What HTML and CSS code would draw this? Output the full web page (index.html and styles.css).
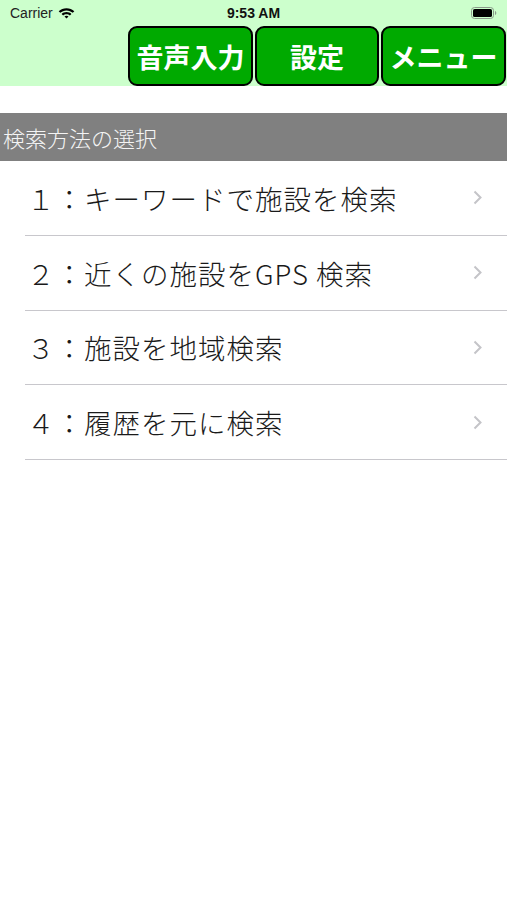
FILE: index.html
```html
<!DOCTYPE html>
<html>
<head>
    <title>検索方法の選択</title>
    <meta charset="utf-8">
    <link rel="stylesheet" href="styles.css">
</head>
<body>
    <div class="top">
        <div class="status-bar">
            <div class="carrier">
                Carrier
                <svg class="wifi" width="17" height="12" viewBox="0 0 17 12">
                    <path d="M8.5 1.2c3 0 5.7 1.1 7.8 3l-1.5 1.6c-1.7-1.5-3.9-2.4-6.3-2.4S3.9 4.3 2.2 5.8L.7 4.2c2.1-1.9 4.8-3 7.8-3z" fill="#000"/>
                    <path d="M8.5 5c1.9 0 3.6.7 4.9 1.9l-1.5 1.6c-.9-.8-2.1-1.3-3.4-1.3s-2.5.5-3.4 1.3L3.6 6.9C4.9 5.7 6.6 5 8.5 5z" fill="#000"/>
                    <path d="M8.5 8.7c.8 0 1.5.3 2 .8L8.5 11.6 6.5 9.5c.5-.5 1.2-.8 2-.8z" fill="#000"/>
                </svg>
            </div>
            <div class="time">9:53 AM</div>
            <div class="battery">
                <svg width="26" height="12" viewBox="0 0 26 12">
                    <rect x="0.5" y="0.5" width="22" height="11" rx="3" fill="none" stroke="#8a9a8a"/>
                    <rect x="2" y="2" width="19" height="8" rx="1.6" fill="#000"/>
                    <path d="M24 4v4c.8-.3 1.3-1.1 1.3-2S24.8 4.3 24 4z" fill="#8a9a8a"/>
                </svg>
            </div>
        </div>
        <div class="nav-buttons">
            <button type="button" class="nav-btn">音声入力</button>
            <button type="button" class="nav-btn">設定</button>
            <button type="button" class="nav-btn">メニュー</button>
        </div>
    </div>

    <div class="section-header">検索方法の選択</div>

    <ul class="menu-list">
        <li class="menu-item">
            <span class="item-label">１：キーワードで施設を検索</span>
            <svg class="chevron" width="9" height="15" viewBox="0 0 9 15"><path d="M1.5 1.5l6 6-6 6" fill="none" stroke="#c4c4c8" stroke-width="2"/></svg>
        </li>
        <li class="menu-item">
            <span class="item-label">２：近くの施設をGPS 検索</span>
            <svg class="chevron" width="9" height="15" viewBox="0 0 9 15"><path d="M1.5 1.5l6 6-6 6" fill="none" stroke="#c4c4c8" stroke-width="2"/></svg>
        </li>
        <li class="menu-item">
            <span class="item-label">３：施設を地域検索</span>
            <svg class="chevron" width="9" height="15" viewBox="0 0 9 15"><path d="M1.5 1.5l6 6-6 6" fill="none" stroke="#c4c4c8" stroke-width="2"/></svg>
        </li>
        <li class="menu-item">
            <span class="item-label">４：履歴を元に検索</span>
            <svg class="chevron" width="9" height="15" viewBox="0 0 9 15"><path d="M1.5 1.5l6 6-6 6" fill="none" stroke="#c4c4c8" stroke-width="2"/></svg>
        </li>
    </ul>
</body>
</html>
```

FILE: styles.css
```css
body {
    margin: 0;
    width: 507px;
    min-height: 900px;
    background-color: #ffffff;
    font-family: "Noto Sans CJK JP", "Noto Sans", sans-serif;
    color: #111111;
}

.top {
    background-color: #ccffcc;
    height: 86px;
    display: flex;
    flex-direction: column;
}

.status-bar {
    height: 26px;
    display: flex;
    align-items: center;
    justify-content: space-between;
    padding: 0 10px;
    font-family: "Liberation Sans", Arial, sans-serif;
    font-size: 14px;
    position: relative;
}

.carrier {
    display: flex;
    align-items: center;
    gap: 5px;
    color: #222;
}

.time {
    position: absolute;
    left: 0;
    right: 0;
    text-align: center;
    font-weight: bold;
    pointer-events: none;
}

.battery {
    display: flex;
    align-items: center;
}

.nav-buttons {
    display: flex;
    justify-content: flex-end;
    gap: 2px;
    padding-right: 1px;
}

.nav-btn {
    width: 125px;
    height: 60px;
    box-sizing: border-box;
    background-color: #00aa00;
    border: 2px solid #000000;
    border-radius: 9px;
    color: #ffffff;
    font-family: "Noto Sans CJK JP", sans-serif;
    font-size: 27px;
    font-weight: bold;
    padding: 0;
    white-space: nowrap;
}

.nav-btn:nth-child(2) {
    width: 124px;
}

.section-header {
    margin-top: 27px;
    height: 48px;
    background-color: #808080;
    color: #f4f4f4;
    font-size: 22px;
    font-weight: 300;
    display: flex;
    align-items: center;
    padding-left: 3px;
}

.menu-list {
    list-style: none;
    margin: 0;
    padding: 0 0 0 25px;
}

.menu-item {
    height: 74.75px;
    box-sizing: border-box;
    border-bottom: 1px solid #c8c7cc;
    display: flex;
    align-items: center;
    justify-content: space-between;
    padding: 0 25px 0 2px;
}

.item-label {
    font-size: 27.5px;
    font-weight: 300;
    letter-spacing: 1px;
    color: #1a1a1a;
}

.chevron {
    flex-shrink: 0;
}
```
